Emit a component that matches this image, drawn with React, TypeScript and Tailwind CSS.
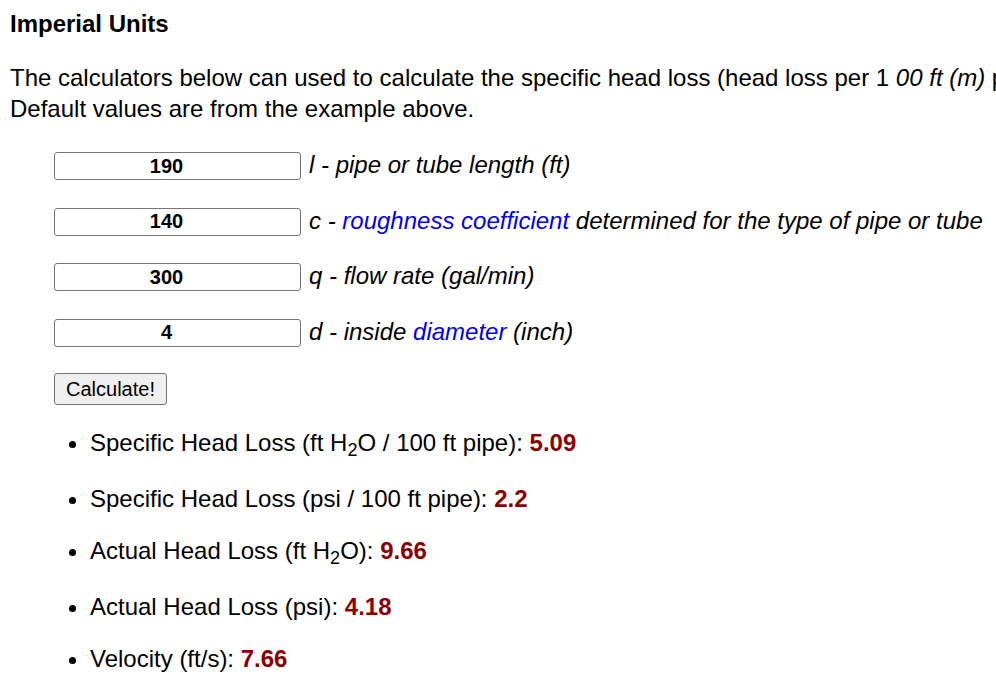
import React from "react";

const rows = [
  { value: "190", label: <>l - pipe or tube length (ft)</> },
  {
    value: "140",
    label: (
      <>
        c - <a className="text-[#0000ee]">roughness coefficient</a> determined for the type of pipe or tube
      </>
    ),
  },
  { value: "300", label: <>q - flow rate (gal/min)</> },
  {
    value: "4",
    label: (
      <>
        d - inside <a className="text-[#0000ee]">diameter</a> (inch)
      </>
    ),
  },
];

const results = [
  { label: <>Specific Head Loss (ft H<sub>2</sub>O / 100 ft pipe): </>, value: "5.09", sub: true },
  { label: <>Specific Head Loss (psi / 100 ft pipe): </>, value: "2.2", sub: false },
  { label: <>Actual Head Loss (ft H<sub>2</sub>O): </>, value: "9.66", sub: true },
  { label: <>Actual Head Loss (psi): </>, value: "4.18", sub: false },
  { label: <>Velocity (ft/s): </>, value: "7.66", sub: false },
];

export default function App() {
  return (
    <div className="h-[689px] w-full overflow-hidden bg-white px-[10px] pt-[8px] font-['Liberation_Sans',Arial,sans-serif] text-[24px] leading-[31px] text-black">
      <h3 className="font-bold">Imperial Units</h3>

      <p className="mt-[23px] whitespace-nowrap">
        The calculators below can used to calculate the specific head loss (head loss per 1 <i>00 ft (m)</i> pipe) and
        the actual head loss for the actual length of pipe or tube.
        <br />
        Default values are from the example above.
      </p>

      <form className="ml-[44px] mt-[28px] flex flex-col gap-[27.5px]">
        {rows.map((r) => (
          <div key={r.value} className="flex h-[28px] items-center whitespace-nowrap">
            <input
              readOnly
              value={r.value}
              className="h-[28px] w-[247px] rounded-[3px] border border-[#767676] bg-white pr-[22px] text-center text-[20px] font-bold text-black outline-none"
            />
            <span className="ml-[8px] -mt-[3px] italic">{r.label}</span>
          </div>
        ))}
        <div className="-mt-[2px]">
          <button
            type="button"
            className="h-[32px] rounded-[3px] border border-[#767676] bg-[#efefef] px-[11px] text-[20px] leading-none text-black"
          >
            Calculate!
          </button>
        </div>
      </form>

      <ul className="ml-[80px] mt-[22px] list-disc">
        {results.map((r, i) => (
          <li key={i} className={r.sub ? "mb-[25px]" : "mb-[21px]"}>
            {r.label}
            <b className="text-[#8b0000]">{r.value}</b>
          </li>
        ))}
      </ul>
    </div>
  );
}
